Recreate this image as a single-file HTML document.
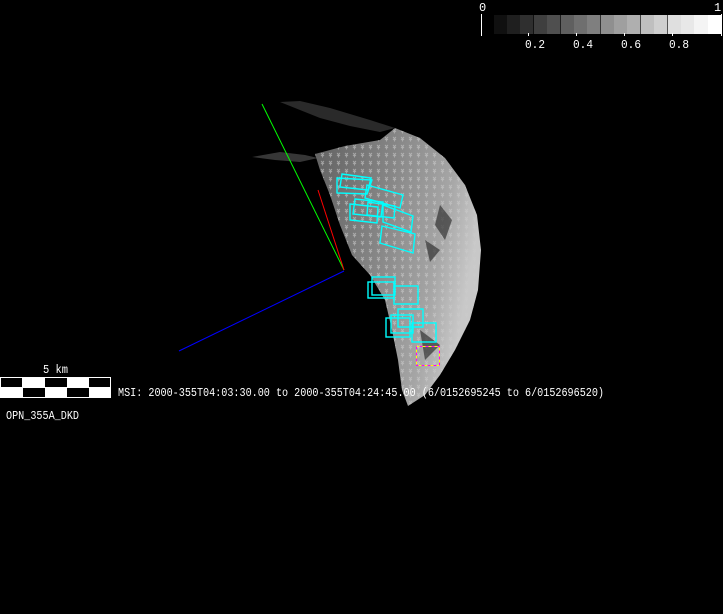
<!DOCTYPE html>
<html><head><meta charset="utf-8"><style>
html,body{margin:0;padding:0;background:#000;width:723px;height:614px;overflow:hidden}
svg{display:block}
text{font-family:"Liberation Mono",monospace;fill:#fff;font-size:12px}
</style></head><body>
<svg width="723" height="614" viewBox="0 0 723 614" xmlns="http://www.w3.org/2000/svg">
<defs>
<linearGradient id="g" x1="0" y1="0" x2="1" y2="0.3">
<stop offset="0" stop-color="#606060"/><stop offset="0.45" stop-color="#858585"/><stop offset="0.8" stop-color="#a5a5a5"/><stop offset="1" stop-color="#c8c8c8"/>
</linearGradient>
<pattern id="p" width="8" height="8" patternUnits="userSpaceOnUse">
<path d="M1 1l3 3M4 1l-3 3M2.5 2.5v3" stroke="#ccc" stroke-width="0.9" fill="none" opacity="0.6"/>
</pattern>
</defs>
<g>
<rect x="494" y="15" width="13.4" height="19" fill="#101010"/>
<rect x="507" y="15" width="13.4" height="19" fill="#1f1f1f"/>
<rect x="520" y="15" width="13.4" height="19" fill="#2f2f2f"/>
<rect x="534" y="15" width="13.4" height="19" fill="#3f3f3f"/>
<rect x="547" y="15" width="13.4" height="19" fill="#4f4f4f"/>
<rect x="561" y="15" width="13.4" height="19" fill="#5f5f5f"/>
<rect x="574" y="15" width="13.4" height="19" fill="#6f6f6f"/>
<rect x="587" y="15" width="13.4" height="19" fill="#7f7f7f"/>
<rect x="601" y="15" width="13.4" height="19" fill="#8f8f8f"/>
<rect x="614" y="15" width="13.4" height="19" fill="#9f9f9f"/>
<rect x="627" y="15" width="13.4" height="19" fill="#afafaf"/>
<rect x="641" y="15" width="13.4" height="19" fill="#bfbfbf"/>
<rect x="654" y="15" width="13.4" height="19" fill="#cfcfcf"/>
<rect x="668" y="15" width="13.4" height="19" fill="#dfdfdf"/>
<rect x="681" y="15" width="13.4" height="19" fill="#e8e8e8"/>
<rect x="694" y="15" width="14" height="19" fill="#f4f4f4"/>
<rect x="708" y="15" width="13" height="19" fill="#fff"/>
<line x1="481.5" y1="14" x2="481.5" y2="36" stroke="#fff"/>
<line x1="721.5" y1="14" x2="721.5" y2="36" stroke="#fff"/>
<line x1="528.5" y1="33" x2="528.5" y2="36" stroke="#fff"/>
<line x1="576.5" y1="33" x2="576.5" y2="36" stroke="#fff"/>
<line x1="624.5" y1="33" x2="624.5" y2="36" stroke="#fff"/>
<line x1="672.5" y1="33" x2="672.5" y2="36" stroke="#fff"/>
<text x="479" y="11">0</text><text x="714" y="11">1</text>
<text x="525" y="48" textLength="20" lengthAdjust="spacingAndGlyphs">0.2</text><text x="573" y="48" textLength="20" lengthAdjust="spacingAndGlyphs">0.4</text><text x="621" y="48" textLength="20" lengthAdjust="spacingAndGlyphs">0.6</text><text x="669" y="48" textLength="20" lengthAdjust="spacingAndGlyphs">0.8</text>
</g>
<path d="M280 102 L300 101 L330 108 L370 120 L395 128 L380 132 L350 126 L320 118 L300 110 Z" fill="#777" opacity="0.35"/>
<path d="M252 157 L280 152 L305 155 L318 158 L300 162 L275 160 Z" fill="#777" opacity="0.45"/>
<path d="M315 154 L345 146 L380 140 L395 128 L420 138 L445 158 L465 185 L477 215 L481 250 L478 290 L470 320 L455 350 L440 375 L425 395 L408 406 L402 390 L398 360 L392 330 L385 300 L370 275 L352 255 L340 225 L330 195 L320 170 Z" fill="url(#g)"/>
<path d="M315 154 L345 146 L380 140 L395 128 L420 138 L445 158 L465 185 L477 215 L481 250 L478 290 L470 320 L455 350 L440 375 L425 395 L408 406 L402 390 L398 360 L392 330 L385 300 L370 275 L352 255 L340 225 L330 195 L320 170 Z" fill="url(#p)"/>
<path d="M440 205 L452 220 L445 240 L435 225 Z M425 240 L440 250 L430 262 Z M420 330 L440 345 L425 360 Z" fill="#333" opacity="0.7"/>
<line x1="262" y1="104" x2="344" y2="270" stroke="#0f0"/>
<line x1="318" y1="190" x2="344" y2="270" stroke="#f00"/>
<line x1="179" y1="351" x2="344" y2="271" stroke="#00f"/>
<g fill="none" stroke="#0ff" stroke-width="1.4">
<polygon points="337,178 372,180 367,194 337,193"/>
<polygon points="342,174 371,178 368,190 340,187"/>
<polygon points="367,185 403,195 400,208 365,198"/>
<polygon points="350,204 378,207 377,223 350,220"/>
<polygon points="355,199 383,202 381,217 353,214"/>
<polygon points="383,205 413,216 411,232 383,222"/>
<polygon points="368,202 395,206 394,218 367,215"/>
<polygon points="382,226 415,234 413,253 380,243"/>
<rect x="368" y="282" width="26" height="16"/>
<rect x="372" y="277" width="23" height="18"/>
<rect x="394" y="286" width="24" height="18"/>
<rect x="386" y="318" width="24" height="19"/>
<rect x="391" y="315" width="22" height="18"/>
<rect x="398" y="309" width="25" height="18"/>
<rect x="412" y="323" width="24" height="19"/>
</g>
<rect x="416.5" y="346.5" width="23" height="19" fill="none" stroke="#ff0" stroke-dasharray="3,3"/>
<rect x="416.5" y="346.5" width="23" height="19" fill="none" stroke="#f0f" stroke-dasharray="3,3" stroke-dashoffset="3"/>
<rect x="0.5" y="377.5" width="110" height="20" fill="#fff" stroke="#fff"/>
<rect x="1" y="378" width="21" height="9" fill="#000"/>
<rect x="45" y="378" width="22" height="9" fill="#000"/>
<rect x="89" y="378" width="21" height="9" fill="#000"/>
<rect x="23" y="388" width="22" height="9" fill="#000"/>
<rect x="67" y="388" width="22" height="9" fill="#000"/>
<text x="43" y="373" textLength="25" lengthAdjust="spacingAndGlyphs">5 km</text>
<text x="118" y="396" textLength="486" lengthAdjust="spacingAndGlyphs">MSI:  2000-355T04:03:30.00 to 2000-355T04:24:45.00 (6/0152695245 to 6/0152696520)</text>
<text x="6" y="419" textLength="73" lengthAdjust="spacingAndGlyphs">OPN_355A_DKD</text>
</svg>
</body></html>
